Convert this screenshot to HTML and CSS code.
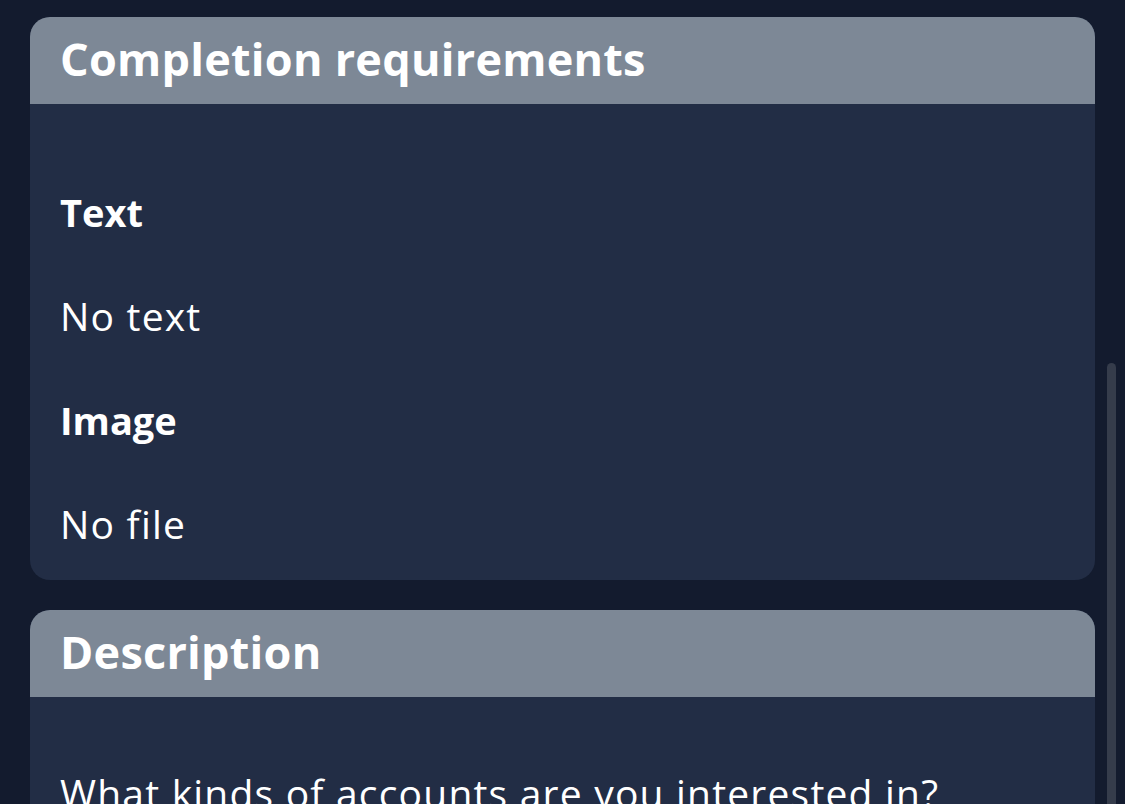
FILE: index.html
```html
<!DOCTYPE html>
<html>
<head>
<meta charset="utf-8">
<link rel="stylesheet" href="styles.css">
</head>
<body>
<div class="page">
  <div class="content">
    <section class="card">
      <header class="card-head"><h2 class="card-title">Completion requirements</h2></header>
      <div class="card-body first">
        <h3 class="label">Text</h3>
        <p class="value">No text</p>
        <h3 class="label">Image</h3>
        <p class="value">No file</p>
      </div>
    </section>
    <section class="card">
      <header class="card-head"><h2 class="card-title">Description</h2></header>
      <div class="card-body second">
        <p class="value">What kinds of accounts are you interested in?</p>
      </div>
    </section>
  </div>
  <div class="scrollbar"><div class="thumb"></div></div>
</div>
</body>
</html>
```
FILE: styles.css
```css
* { box-sizing: border-box; }
html, body { margin: 0; padding: 0; }
body {
  background: #131b2e;
  font-family: "Open Sans", "Lato", sans-serif;
  font-variant-ligatures: none;
  color: #ffffff;
  width: 1125px;
  height: 804px;
  overflow: hidden;
}
.page {
  display: flex;
  height: 804px;
  padding: 17px 0 0 30px;
}
.content {
  width: 1065px;
  display: flex;
  flex-direction: column;
  gap: 30px;
}
.card {
  background: #222d45;
  border-radius: 20px;
  overflow: hidden;
  flex-shrink: 0;
}
.card-head {
  background: #7d8896;
  height: 87px;
  padding: 0 30px;
}
.card-title {
  margin: 0;
  font-size: 45px;
  font-weight: 700;
  letter-spacing: 0.25px;
  line-height: 87px;
  position: relative;
  top: -2px;
}
.card-body {
  padding: 80px 30px 28px;
}
.card-body.second { padding-top: 68px; }
.label, .value {
  margin: 0 0 48px;
  font-size: 39px;
  line-height: 56px;
  white-space: nowrap;
}
.label { font-weight: 700; font-size: 38px; }
.value { font-weight: 400; letter-spacing: 1.2px; }
.card-body .value:last-child { margin-bottom: 0; }
.scrollbar {
  width: 30px;
  padding: 346px 0 0 12px;
}
.thumb {
  width: 9px;
  height: 460px;
  background: #353c4b;
  border-radius: 5px;
}
```
